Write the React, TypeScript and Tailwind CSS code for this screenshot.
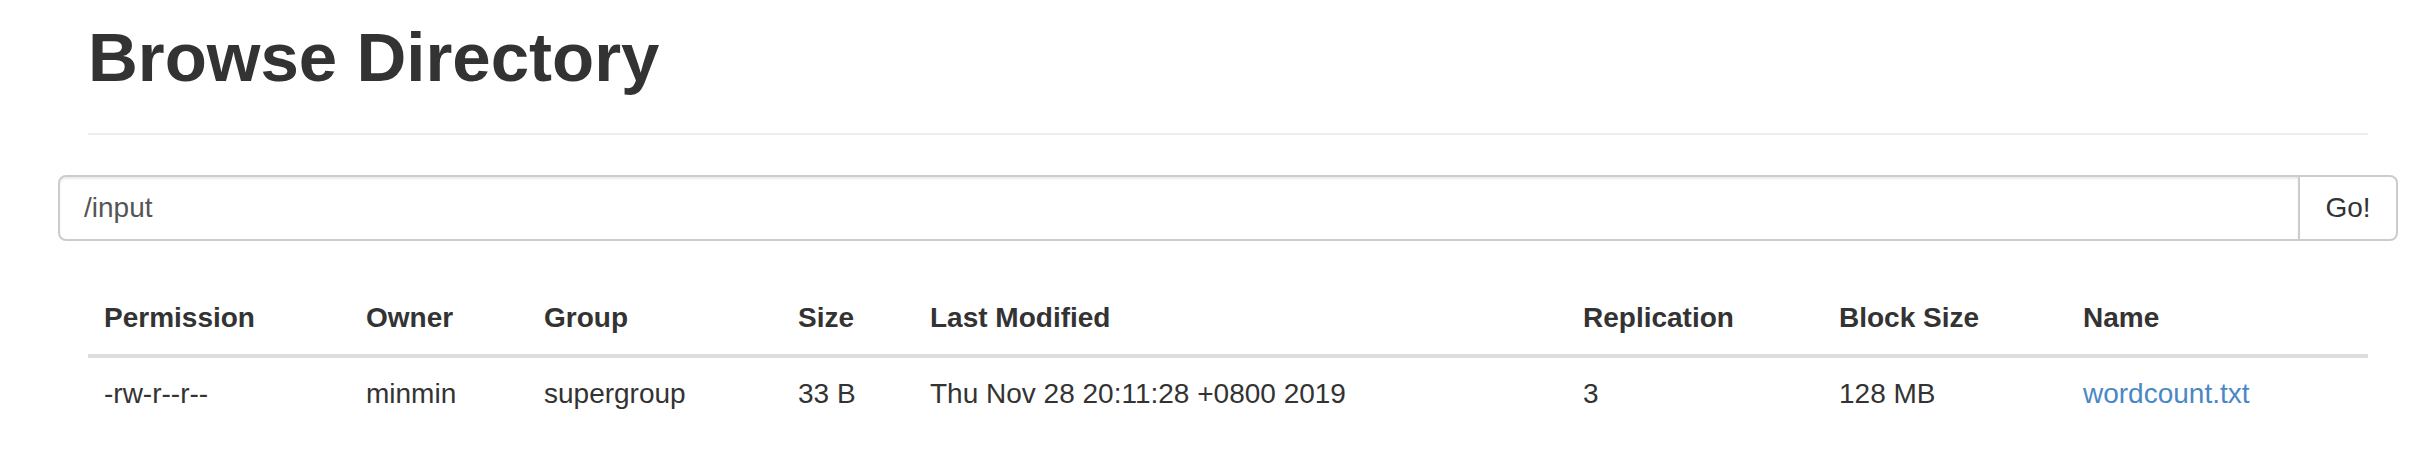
const columns = [
  { label: "Permission", width: "w-[262px]" },
  { label: "Owner", width: "w-[178px]" },
  { label: "Group", width: "w-[254px]" },
  { label: "Size", width: "w-[132px]" },
  { label: "Last Modified", width: "w-[653px]" },
  { label: "Replication", width: "w-[256px]" },
  { label: "Block Size", width: "w-[244px]" },
  { label: "Name", width: "w-[301px]" },
];

const files = [
  {
    permission: "-rw-r--r--",
    owner: "minmin",
    group: "supergroup",
    size: "33 B",
    modified: "Thu Nov 28 20:11:28 +0800 2019",
    replication: "3",
    blockSize: "128 MB",
    name: "wordcount.txt",
  },
];

export default function App() {
  return (
    <div className="w-[2426px] h-[468px] overflow-hidden bg-white text-[#333] font-['Liberation_Sans',Arial,sans-serif]">
      <div className="pl-[88px] pr-[58px]">
        {/* page header */}
        <div className="pt-[18px] pb-[36px] border-b-2 border-[#eee]">
          <h1 className="text-[69px] leading-[79px] font-bold">Browse Directory</h1>
        </div>

        {/* path input */}
        <div className="mt-[40px] -mx-[30px] flex h-[66px]">
          <input
            type="text"
            defaultValue="/input"
            className="flex-1 min-w-0 h-full px-[24px] text-[28px] text-[#555] border-2 border-[#ccc] rounded-l-[8px] shadow-[inset_0_2px_2px_rgba(0,0,0,0.075)] outline-none font-['Liberation_Sans',Arial,sans-serif]"
          />
          <button className="w-[98px] h-full border-2 border-l-0 border-[#ccc] rounded-r-[8px] bg-white text-[28px] text-[#333]">
            Go!
          </button>
        </div>

        {/* listing */}
        <table className="mt-[41px] w-full table-fixed border-collapse">
          <thead>
            <tr>
              {columns.map((c) => (
                <th
                  key={c.label}
                  className={`${c.width} px-4 py-4 text-left text-[28px] leading-[40px] font-bold border-b-4 border-[#ddd]`}
                >
                  {c.label}
                </th>
              ))}
            </tr>
          </thead>
          <tbody>
            {files.map((f) => (
              <tr key={f.name} className="text-[28px] leading-[40px]">
                <td className="px-4 py-4">{f.permission}</td>
                <td className="px-4 py-4">{f.owner}</td>
                <td className="px-4 py-4">{f.group}</td>
                <td className="px-4 py-4">{f.size}</td>
                <td className="px-4 py-4">{f.modified}</td>
                <td className="px-4 py-4">{f.replication}</td>
                <td className="px-4 py-4">{f.blockSize}</td>
                <td className="px-4 py-4">
                  <a href="#" className="text-[#4a87c5]">
                    {f.name}
                  </a>
                </td>
              </tr>
            ))}
          </tbody>
        </table>
      </div>
    </div>
  );
}
